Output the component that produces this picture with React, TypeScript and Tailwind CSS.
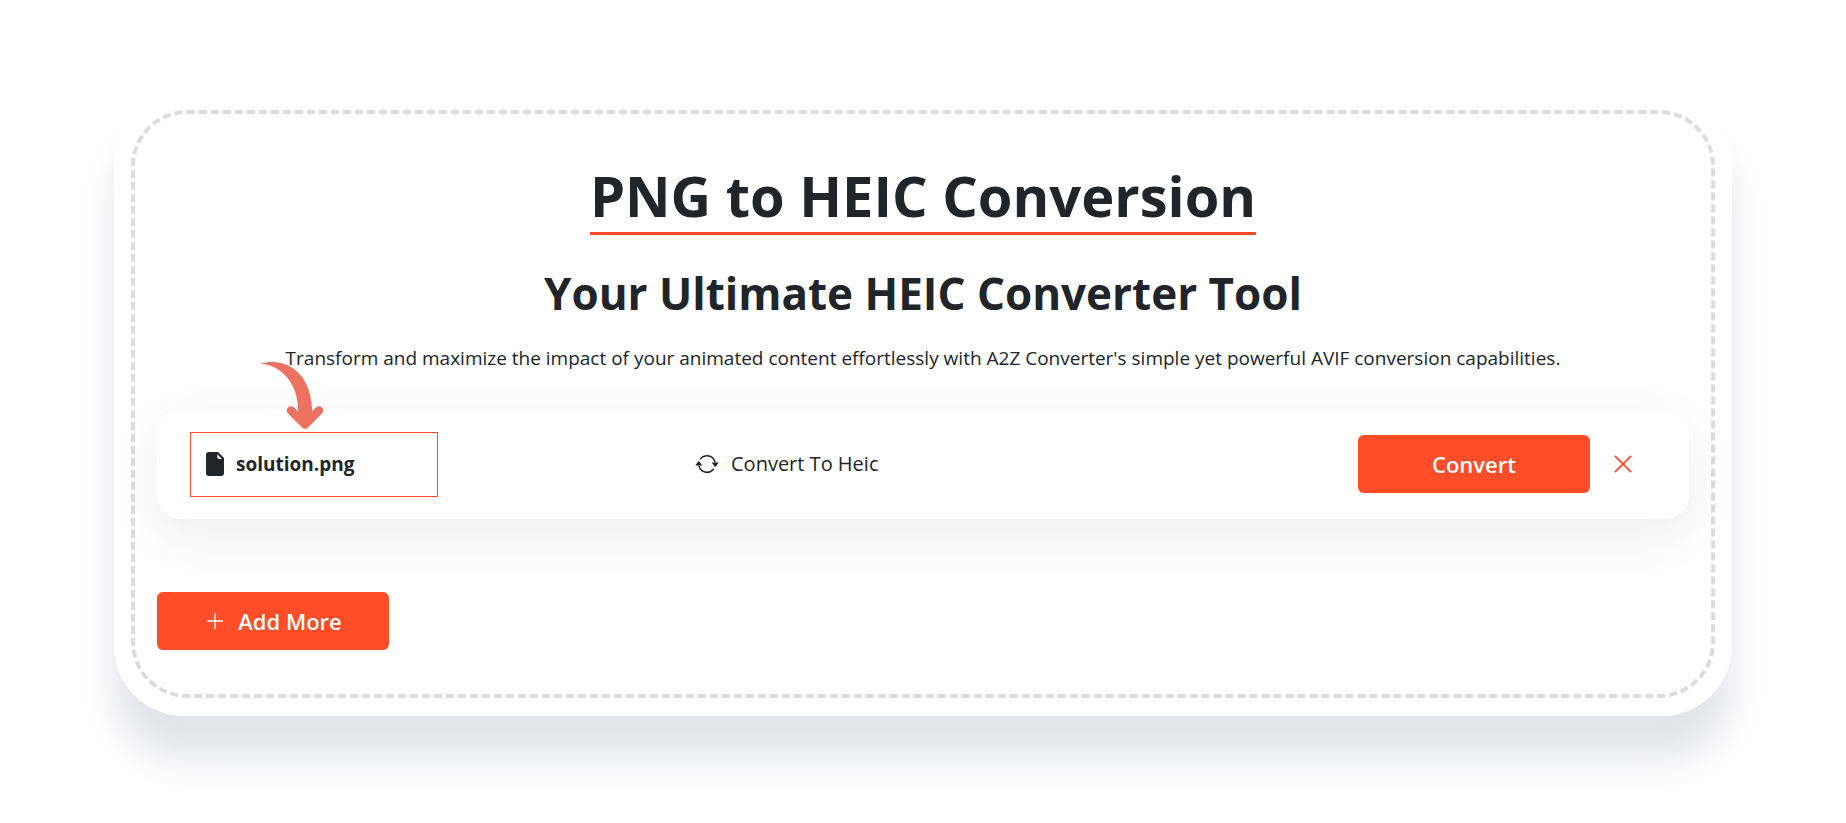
import React from "react";
import { BsArrowRepeat, BsPlusLg, BsXLg } from "react-icons/bs";

function Pointer() {
  return (
    <svg viewBox="0 0 64 70" className="pointer-events-none absolute -top-18 left-[69px] h-[70px] w-16" fill="none" aria-hidden="true">
      <path d="M0 2.500C28 -5 52 14 52 50L38 50C39 31 28 5 0 2.500Z" fill="#ee7261" />
      <path d="M31 49.500L45 63.500L59 49.500" stroke="#ee7261" strokeWidth="8.500" strokeLinecap="round" strokeLinejoin="round" />
      <path d="M38 46H52V58L45 64L38 58Z" fill="#ee7261" />
    </svg>
  );
}

function FileIcon() {
  return (
    <svg viewBox="0 0 18 24" className="h-6 w-[18px]" aria-hidden="true">
      <path d="M3 0H12L18 6V21Q18 24 15 24H3Q0 24 0 21V3Q0 0 3 0Z" fill="#212529" />
      <path d="M11.300 2.200L16 6.900H13Q11.300 6.900 11.300 5.200Z" fill="#fff" />
    </svg>
  );
}

export default function App() {
  return (
    <main className="px-[114px] pt-[92px] pb-24 font-['Open_Sans','Noto_Sans',sans-serif] text-[#212529]">
      <section className="rounded-[70px] bg-white px-[17px] py-[18px] shadow-[0_42px_36px_#e3e4ea]">
        <div className="flex flex-col items-center rounded-[56px] border-4 border-dashed border-[#dcdcdc] px-[22px] pt-11 pb-11">
          <h1 className="border-b-3 border-[#ff4c29] text-[56px] leading-[74px] font-bold">PNG to HEIC Conversion</h1>
          <h2 className="mt-8 text-[44px] leading-[52px] font-bold">Your Ultimate HEIC Converter Tool</h2>
          <p className="mt-6 text-[19px] leading-[30px]">
            Transform and maximize the impact of your animated content effortlessly with A2Z Converter's simple yet powerful AVIF conversion capabilities.
          </p>
          <div className="mt-9 flex h-[110px] w-full items-center rounded-3xl bg-white pr-[55px] pl-[33px] shadow-[0_16px_48px_rgba(33,37,41,0.08)]">
            <div className="relative flex h-[65px] w-[248px] items-center gap-3 border border-[#ff4c29] pl-[15px]">
              <Pointer />
              <FileIcon />
              <span className="text-[19px] font-bold">solution.png</span>
            </div>
            <div className="ml-[257px] flex items-center gap-3">
              <BsArrowRepeat className="size-6" />
              <span className="text-xl font-medium">Convert To Heic</span>
            </div>
            <button type="button" className="ml-auto h-[58px] w-[232px] rounded-md bg-[#ff4c29] text-[22px] font-semibold text-white">Convert</button>
            <button type="button" aria-label="Remove file" className="ml-[22px] text-[#ff4c29]">
              <BsXLg className="size-[22px]" strokeWidth={0.4} />
            </button>
          </div>
          <button type="button" className="mt-[73px] flex h-[58px] w-[232px] items-center justify-center gap-3 self-start rounded-md bg-[#ff4c29] text-[22px] font-semibold text-white">
            <BsPlusLg className="size-[22px]" />
            Add More
          </button>
        </div>
      </section>
    </main>
  );
}
